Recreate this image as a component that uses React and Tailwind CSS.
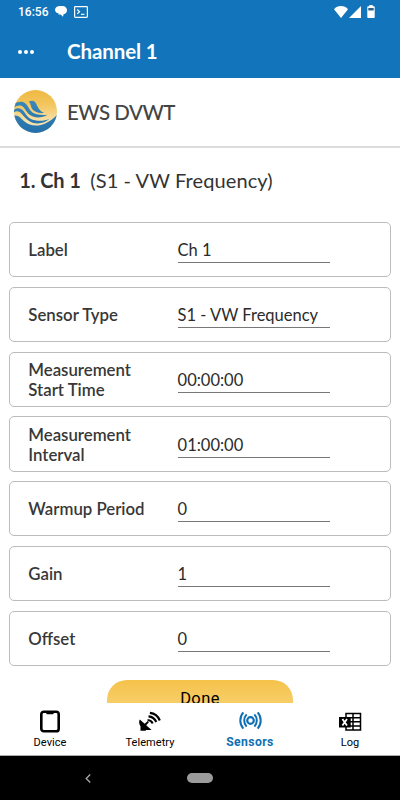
const fields = [
  { label: "Label", value: "Ch 1" },
  { label: "Sensor Type", value: "S1 - VW Frequency" },
  { label: "Measurement Start Time", value: "00:00:00" },
  { label: "Measurement Interval", value: "01:00:00" },
  { label: "Warmup Period", value: "0" },
  { label: "Gain", value: "1" },
  { label: "Offset", value: "0" },
];

function StatusBar() {
  return (
    <div className="flex h-[23px] items-center pl-[18px] pr-[25px] text-white">
      <span className="font-['Roboto'] text-[12px] font-medium leading-none">16:56</span>
      <svg className="ml-[7px]" width="12" height="11" viewBox="0 0 12 11" fill="currentColor">
        <path d="M5 0h2.600C10 0 12 1.800 12 4.200c0 2.100-1.500 3.700-3.400 4.100L8 10.800 5.600 8.400 3.400 8.600l.1-1.300C1.500 7 0 5.700 0 3.700 0 1.500 2.300 0 5 0z" />
      </svg>
      <svg className="ml-[7px]" width="14" height="12" viewBox="0 0 14 12" fill="none" stroke="currentColor">
        <rect x=".6" y=".6" width="12.800" height="10.800" rx=".8" strokeWidth="1.200" />
        <path d="M3.200 3.500l2.400 2.200-2.400 2.200M7 8.300h3.400" strokeWidth="1.200" />
      </svg>
      <svg className="ml-auto" width="14" height="12" viewBox="0 0 14 12" fill="currentColor">
        <path d="M7 12L0 3.200C1.800 1 4.200 0 7 0s5.200 1 7 3.200z" />
      </svg>
      <svg className="ml-[1px]" width="12" height="12" viewBox="0 0 12 12" fill="currentColor">
        <path d="M12 0v12H0z" />
      </svg>
      <svg className="ml-[6px]" width="8" height="13" viewBox="0 0 8 13">
        <path d="M2.300 0h3.400v1.300H7c.4 0 .7.300.7.700v10.200c0 .4-.3.700-.7.700H1c-.4 0-.7-.3-.7-.7V2c0-.4.3-.7.7-.7h1.300z" fill="#fff" />
        <path d="M1.300 3h5.400v2.500H1.300z" fill="#2a6390" />
      </svg>
    </div>
  );
}

function Logo() {
  return (
    <svg width="43" height="43" viewBox="0 0 43 43">
      <defs>
        <linearGradient id="sun" x1="0" y1="0" x2="0" y2="1">
          <stop offset="0" stopColor="#efb842" />
          <stop offset=".35" stopColor="#f3c65f" />
          <stop offset=".75" stopColor="#f8e3b0" />
        </linearGradient>
        <linearGradient id="sea" gradientUnits="userSpaceOnUse" x1="0" y1="10" x2="0" y2="43">
          <stop offset="0" stopColor="#3a88b9" />
          <stop offset="1" stopColor="#2470aa" />
        </linearGradient>
        <clipPath id="disc">
          <circle cx="21.500" cy="21.500" r="21.500" />
        </clipPath>
      </defs>
      <g clipPath="url(#disc)">
        <rect width="43" height="43" fill="url(#sun)" />
        <path d="M0 14C4 11.500 9 10.800 12 14c3 3.500 3.500 7 8 9.300 3 1.500 8 2 13.500 1.500-6 3.700-13 3.400-17.500.3C11.500 22 10.500 16 6.500 15.500c-2.500-.3-4.500.5-6.500 2z" fill="url(#sea)" />
        <path d="M14.800 11.800c3-1.500 5.200-1.300 7 1.400 1.700 2.700 3.200 7.800 8.200 9.500-5 .8-10-.7-12-4C16.500 16.200 17 13.500 14.800 11.800z" fill="url(#sea)" />
        <path d="M0 19.500c3-2 7-2 9.500 1.500 3 4.300 5 8 11.500 9.300 5 1 10 .5 14.500-1.500-5 5-14 6.200-20 2.500C9.500 27.800 8 21.800 3.500 21.300c-1.500-.1-2.500.2-3.500 1z" fill="url(#sea)" />
        <path d="M0 25.500c5-.8 7 3 10.500 6C18 38 31 37.500 43 25v18H0z" fill="url(#sea)" />
      </g>
    </svg>
  );
}

function FieldCard({ label, value }) {
  return (
    <div className="flex h-[55.300px] shrink-0 items-center rounded-[5px] border border-[#bcbcbc] pl-[18px]">
      <div className="w-[149.300px] shrink-0 pr-4 pt-[1px] text-[16.800px] font-semibold leading-[20px] text-[#383838]">
        {label}
      </div>
      <div className="mt-[1px] h-[26px] w-[152px] border-b border-[#777] pt-[1px] text-[16.500px] leading-[24px] text-[#2b2b2b] whitespace-nowrap">
        {value}
      </div>
    </div>
  );
}

function DeviceIcon() {
  return (
    <svg width="22" height="24" viewBox="0 0 22 24" fill="none">
      <rect x="2.300" y="1.700" width="17.400" height="19.600" rx="2.600" stroke="#000" strokeWidth="2.600" />
      <path d="M6.700 1h8.600v1.800l-1.300 1.500H8L6.700 2.800z" fill="#000" />
    </svg>
  );
}

function TelemetryIcon() {
  return (
    <svg width="22" height="24" viewBox="0 0 22 24" fill="none" stroke="#000">
      <path d="M.8 9.500l4.900 4.200 3-2.700 1.200 1.200-2.700 3 5.400 4.800H7l-.3.800H1.500v-4.500C-.2 14-.2 11.500.8 9.500z" fill="#000" stroke="none" />
      <path d="M8.600 10c2.600.2 4.200 1.200 5 3.500M9.500 6.300c3.800.3 6.300 2.400 7.800 5.700M10.900 2.900c4.600.5 8.100 3.200 9.900 7.600" strokeWidth="2.200" />
    </svg>
  );
}

function SensorsIcon() {
  return (
    <svg width="23" height="24" viewBox="0 0 23 24" fill="none" stroke="#0f6fb3" strokeWidth="2">
      <circle cx="11.500" cy="10.500" r="3.300" strokeWidth="2.200" />
      <path d="M7.600 4.300c-3.200 3.500-3.200 8.900 0 12.400M15.400 4.300c3.200 3.500 3.200 8.900 0 12.400M4.300 2.400c-4 4.600-4 11.600 0 16.200M18.700 2.400c4 4.600 4 11.600 0 16.200" />
    </svg>
  );
}

function LogIcon() {
  return (
    <svg width="23" height="24" viewBox="0 0 23 24" fill="none" stroke="#000">
      <path d="M7 3.500h14.500v16.500H7zM14 3.500v16.500M7 7.700h14.500M7 11.800h14.500M7 15.900h14.500" strokeWidth="1.500" />
      <path d="M0 7h11.700v10.500H0z" fill="#000" stroke="none" />
      <path d="M3.400 9l4.600 6.500M8 9l-4.600 6.500" stroke="#fff" strokeWidth="1.800" />
    </svg>
  );
}

function Tab({ icon, label, active }) {
  return (
    <div className="flex flex-1 flex-col items-center pt-[7px]">
      {icon}
      <span
        className={
          active
            ? "mt-[1px] text-[12.200px] leading-[14px] font-bold tracking-[0.4px] text-[#0f6fb3]"
            : "mt-[1px] text-[11px] leading-[15px] tracking-[0.05px] text-black"
        }
      >
        {label}
      </span>
    </div>
  );
}

export default function App() {
  return (
    <div className="flex h-[800px] w-[400px] flex-col overflow-hidden bg-white font-['Lato',sans-serif]">
      <header className="h-[78px] shrink-0 bg-[#1275bb] text-white">
        <StatusBar />
        <div className="flex h-[57px] items-center pl-[18px]">
          <div className="flex w-[49px] gap-[2px]">
            <span className="size-[4px] rounded-full bg-white" />
            <span className="size-[4px] rounded-full bg-white" />
            <span className="size-[4px] rounded-full bg-white" />
          </div>
          <h1 className="text-[20.500px] font-bold tracking-[-0.1px]">Channel 1</h1>
        </div>
      </header>

      <div className="flex h-[70px] shrink-0 items-center border-b-2 border-[#dcdcdc] pl-[13.500px]">
        <div className="pb-[2px]">
          <Logo />
        </div>
        <span className="ml-[10.500px] text-[20.500px] font-medium tracking-[-0.5px] text-[#444]">EWS DVWT</span>
      </div>

      <main className="flex h-[555px] shrink-0 flex-col overflow-hidden px-[9.300px]">
        <h2 className="flex h-[74px] shrink-0 items-center pb-[11px] pl-[10px] text-[20px] text-[#333] whitespace-pre">
          <span className="font-bold tracking-[-0.1px]">1. Ch 1</span>
          <span className="pl-[9.500px] tracking-[0.1px]">(S1 - VW Frequency)</span>
        </h2>
        <div className="flex flex-col gap-[9.500px]">
          {fields.map((field) => (
            <FieldCard key={field.label} label={field.label} value={field.value} />
          ))}
        </div>
        <button className="mt-[14px] h-[46px] w-[186px] shrink-0 self-center rounded-[20px] bg-linear-to-b from-[#f5c24a] to-[#f9d980] pb-[8px] font-['Roboto'] text-[16.500px] tracking-[0.4px] text-black">
          Done
        </button>
      </main>

      <nav className="flex h-[53px] shrink-0 border-b border-[#aaa] bg-white font-['Roboto']">
        <Tab icon={<DeviceIcon />} label="Device" />
        <Tab icon={<TelemetryIcon />} label="Telemetry" />
        <Tab icon={<SensorsIcon />} label="Sensors" active />
        <Tab icon={<LogIcon />} label="Log" />
      </nav>

      <div className="flex h-[44px] shrink-0 items-center bg-black pl-[85px]">
        <svg width="6" height="9" viewBox="0 0 6 9" fill="none" stroke="#aaa" strokeWidth="1.300">
          <path d="M5.200.5l-4 4 4 4" />
        </svg>
        <div className="ml-[96px] h-[9.500px] w-[26px] rounded-full bg-[#9b9b9b]" />
      </div>
    </div>
  );
}
